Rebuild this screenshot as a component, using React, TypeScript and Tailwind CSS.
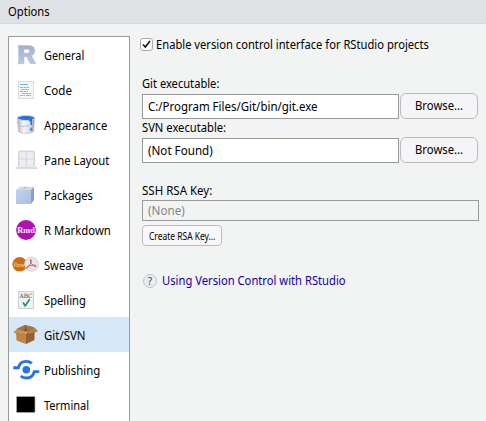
import React from "react";

function GeneralIcon() {
  return (
    <svg width="36" height="35" viewBox="0 0 36 35">
      <defs>
        <linearGradient id="gr" x1="0" y1="0" x2="0" y2="1"><stop offset="0" stopColor="#a5b0d0" /><stop offset="1" stopColor="#bcc7e3" /></linearGradient>
      </defs>
      <path fillRule="evenodd" fill="url(#gr)" stroke="#a9b3cf" strokeWidth=".4" d="M9 8.500h10.500c4 0 6.300 1.900 6.300 5.200 0 2.400-1.200 4.100-3.300 4.900l4.300 8.100h-5.600l-3.400-7H15v7H9v-1l.6-.6V10.200L9 9.500zM15 12.300v4h3.300c1.500 0 2.200-.8 2.200-2 0-1.300-.7-2-2.200-2z" />
    </svg>
  );
}

function CodeIcon() {
  return (
    <svg width="36" height="35" viewBox="0 0 36 35">
      <rect x="9.500" y="9.500" width="15" height="17" fill="#f5f6f8" stroke="#d9dbe0" />
      <path d="M11 12.500h8" stroke="#61bdda" />
      <path d="M11 15.500h9M12 17.500h8M11 19.500h8M13 21.500h9M11 23.500h5m1 0h5" stroke="#a2a6ad" strokeDasharray="3 .5" strokeWidth=".9" />
    </svg>
  );
}

function AppearanceIcon() {
  return (
    <svg width="36" height="35" viewBox="0 0 36 35">
      <defs><linearGradient id="bucket"><stop stopColor="#aeb2b8" /><stop offset=".35" stopColor="#f6f7f8" /><stop offset=".75" stopColor="#d8dade" /><stop offset="1" stopColor="#94989e" /></linearGradient></defs>
      <path d="M8.500 11 9.500 24.500c2 2.600 13 2.600 15 0l1-13.500z" fill="url(#bucket)" stroke="#a8acb2" strokeWidth=".5" />
      <ellipse cx="17" cy="11" rx="8.700" ry="2.500" fill="#2872da" stroke="#d0d3d8" strokeWidth=".9" />
      <path d="M20 12h3v5.500c0 1-1.500 1-1.500 0V14.500l-1.500-.5z" fill="#1676ed" />
      <path d="m22 20-1.300 2.500c0 1.800 2.600 1.800 2.600 0z" fill="#3889e6" />
      <path d="M8 15c1 5 6 5 12 3.500" fill="none" stroke="#b9bdc4" />
    </svg>
  );
}

function PaneIcon() {
  return (
    <svg width="36" height="35" viewBox="0 0 36 35">
      <rect x="9" y="8.500" width="17" height="17" rx="1.500" fill="#d3d6dc" />
      <path d="M10.500 10h6.500v6.500h-6.500zm7.500 0h6.500v6.500H18zm-7.500 7.500h6.500V24h-6.500zm7.500 0h6.500V24H18z" fill="#eceef2" stroke="#dfe1e6" strokeWidth=".5" />
      <path d="M8 24.500h19l1.500 1.500v1h-22v-1z" fill="#d9dbe0" />
      <path d="M8 24.500h19" stroke="#e9eaed" />
    </svg>
  );
}

function PackageIcon() {
  return (
    <svg width="36" height="35" viewBox="0 0 36 35">
      <defs><linearGradient id="pkg" x1="0" y1="0" x2="1" y2="1"><stop stopColor="#c2d1ea" /><stop offset="1" stopColor="#a9bfe1" /></linearGradient></defs>
      <path d="m7 13 4-3.200h14L22 13z" fill="#ced9eb" />
      <path d="M7 13h15v14H7z" fill="url(#pkg)" />
      <path d="m22 13 3-3.200V23l-3 4z" fill="#859fcb" />
      <path d="m14.500 11 3-1" stroke="#99acd0" />
    </svg>
  );
}

function MarkdownIcon() {
  return (
    <svg width="36" height="35" viewBox="0 0 36 35">
      <circle cx="17" cy="18" r="9.900" fill="#ac12b0" />
      <text x="17" y="21" textAnchor="middle" fontFamily="'Liberation Serif', serif" fontSize="9" fontWeight="700" textLength="17.500" lengthAdjust="spacingAndGlyphs" fill="#fbe8fb">Rmd</text>
    </svg>
  );
}

function SweaveIcon() {
  return (
    <svg width="36" height="35" viewBox="0 0 36 35">
      <circle cx="10.700" cy="17.300" r="7.300" fill="#ca6e11" />
      <text x="10.200" y="19.500" textAnchor="middle" fontFamily="'DejaVu Serif', serif" fontSize="6" textLength="11.500" lengthAdjust="spacingAndGlyphs" fill="#f8dfbd">Rnw</text>
      <circle cx="22.500" cy="17.300" r="7" fill="#e5e7eb" stroke="#c1c5cb" strokeWidth=".7" />
      <path d="M21.500 12.500c2 0 .5 5-4 9-1.500-1 2-2.700 5-3.200 3-.7 5.500.2 4.500 1.200-2 .7-6-3-5.500-7z" fill="none" stroke="#dd5c50" />
    </svg>
  );
}

function SpellingIcon() {
  return (
    <svg width="36" height="35" viewBox="0 0 36 35">
      <rect x="9.500" y="9.500" width="15" height="17" fill="#eff2f5" stroke="#ccd1d7" />
      <text x="17" y="16" textAnchor="middle" fontFamily="'DejaVu Serif', serif" fontSize="6" textLength="13" lengthAdjust="spacingAndGlyphs" fill="#33383d">ABC</text>
      <path d="m14 20.500 2.200 3.200 4.500-6.500" fill="none" stroke="#239364" strokeWidth="1.700" />
    </svg>
  );
}

function GitIcon() {
  return (
    <svg width="36" height="35" viewBox="0 0 36 35">
      <path d="m8 12 8-4 9 2.500-8 4z" fill="#795029" />
      <path d="m8.500 11.500 7.500-3.500v4.500l-5 2.500zM16 8l9 2.500-7 3.500z" fill="#a7733e" />
      <path d="m7 14.500 10 2V27L7.500 23.500z" fill="#c08448" />
      <path d="m17 16.500 8.500-3.500v10L17 27z" fill="#965f2f" />
      <path d="m8 12-3 3.500 9 2.500 3-3.500z" fill="#cc945a" stroke="#a66e35" strokeWidth=".5" />
      <path d="m17 14.500 3 3 8.500-3.500-3.500-3.500z" fill="#b98045" stroke="#8d5930" strokeWidth=".5" />
    </svg>
  );
}

function PublishIcon() {
  return (
    <svg width="36" height="35" viewBox="0 0 36 35" fill="none" stroke="#2573e4" strokeWidth="2.900">
      <circle cx="17.300" cy="17.700" r="3.800" fill="#2573e4" stroke="none" />
      <path d="M4.300 15.800h5c1-4 4-6.400 8-6.400 2 0 4 .6 5.500 2" />
      <path d="M30.300 19.600h-5c-1 4-4 6.400-8 6.400-2 0-4-.6-5.500-2" />
    </svg>
  );
}

function TerminalIcon() {
  return (
    <svg width="36" height="35" viewBox="0 0 36 35">
      <rect x="7.500" y="9.500" width="18.500" height="16" rx=".8" fill="#000" stroke="#aaa" strokeWidth=".7" />
    </svg>
  );
}

const categories = [
  { name: "General", width: 40, icon: <GeneralIcon /> },
  { name: "Code", width: 28, icon: <CodeIcon /> },
  { name: "Appearance", width: 63, icon: <AppearanceIcon /> },
  { name: "Pane Layout", width: 65, icon: <PaneIcon /> },
  { name: "Packages", width: 49, icon: <PackageIcon /> },
  { name: "R Markdown", width: 67, icon: <MarkdownIcon /> },
  { name: "Sweave", width: 39, icon: <SweaveIcon /> },
  { name: "Spelling", width: 42, icon: <SpellingIcon /> },
  { name: "Git/SVN", width: 42, icon: <GitIcon /> },
  { name: "Publishing", width: 56, icon: <PublishIcon /> },
  { name: "Terminal", width: 45, icon: <TerminalIcon /> },
];

/* A single line of text, condensed or widened to fill the given width. */
function Label({ children, width }: { children: string; width: number }) {
  const ref = React.useRef<HTMLSpanElement>(null);
  const [scale, setScale] = React.useState(1);
  React.useLayoutEffect(() => {
    if (ref.current) {
      setScale(width / ref.current.offsetWidth);
    }
  }, [children, width]);
  return (
    <span className="block" style={{ width }}>
      <span ref={ref} className="inline-block origin-left align-top whitespace-pre" style={{ transform: `scaleX(${scale})` }}>{children}</span>
    </span>
  );
}

function Browse() {
  return (
    <button className="flex h-[26px] w-[78px] items-center justify-center rounded-[6px] border border-[#bcbcbc] bg-[#f5f5f8]">
      <Label width={48}>Browse...</Label>
    </button>
  );
}

export default function App() {
  return (
    <div className="flex h-[421px] w-[486px] flex-col overflow-hidden bg-[#f2f4f4] font-['Noto_Sans','Open_Sans',sans-serif] text-[12px] leading-4 text-black">
      <header className="flex h-6 shrink-0 items-center border-b border-[#d6d8dc] bg-[#e0e1e4] pt-px pl-2">
        <Label width={42}>Options</Label>
      </header>
      <div className="flex min-h-0 flex-1">
        <nav className="mt-3 ml-2 h-[400px] w-[122px] shrink-0 border border-[#999b9b] bg-white">
          {categories.map(({ name, width, icon }) => (
            <div key={name} className={`flex h-[35px] items-center ${name === "Git/SVN" ? "bg-[#d6e8f7]" : ""}`}>
              <span className="w-[35px] shrink-0">{icon}</span>
              <span className="pt-[3px]"><Label width={width}>{name}</Label></span>
            </div>
          ))}
        </nav>
        <main className="flex flex-col pt-3 pl-[10px]">
          <label className="flex h-4 items-center">
            <span className="flex size-[13px] items-center justify-center rounded-[3px] border border-[#aaa] bg-white">
              <svg width="9" height="9" viewBox="0 0 9 9"><path d="m1 4.500 2.300 2.500L8 1" fill="none" stroke="#111" strokeWidth="1.600" /></svg>
            </span>
            <span className="ml-[3px] pt-px"><Label width={273}>Enable version control interface for RStudio projects</Label></span>
          </label>
          <div className="mt-[24px] ml-[2px] h-4"><Label width={77}>Git executable:</Label></div>
          <div className="ml-[2px] mt-px flex items-end gap-px">
            <div className="flex h-[25px] w-[257px] items-center border border-[#999b9b] bg-white pl-[5px]"><Label width={169}>C:/Program Files/Git/bin/git.exe</Label></div>
            <Browse />
          </div>
          <div className="ml-[2px] h-[17px] pt-px"><Label width={84}>SVN executable:</Label></div>
          <div className="ml-[2px] mt-px flex items-end gap-px">
            <div className="flex h-[25px] w-[257px] items-center border border-[#999b9b] bg-white pl-[5px]"><Label width={65}>(Not Found)</Label></div>
            <Browse />
          </div>
          <div className="mt-5 ml-[2px] h-[17px]"><Label width={70}>SSH RSA Key:</Label></div>
          <div className="ml-[2px] flex h-[21px] w-[337px] items-center border border-[#999b9b] pl-[5px] text-[#858585]"><Label width={37}>(None)</Label></div>
          <button className="mt-1 ml-[2px] flex h-[21px] w-[80px] items-center justify-center rounded-[4px] border border-[#bcbcbc] bg-[#f8f8fa] text-[10px]">
            <Label width={66}>Create RSA Key...</Label>
          </button>
          <div className="mt-[27px] ml-[3px] flex h-4 items-center text-[#13009c]">
            <span className="flex size-[14px] items-center justify-center rounded-full border border-[#bbc3cd] bg-[#e8ecf1] text-[10px] leading-none text-[#394653]">?</span>
            <span className="ml-[5px]"><Label width={184}>Using Version Control with RStudio</Label></span>
          </div>
        </main>
      </div>
    </div>
  );
}
